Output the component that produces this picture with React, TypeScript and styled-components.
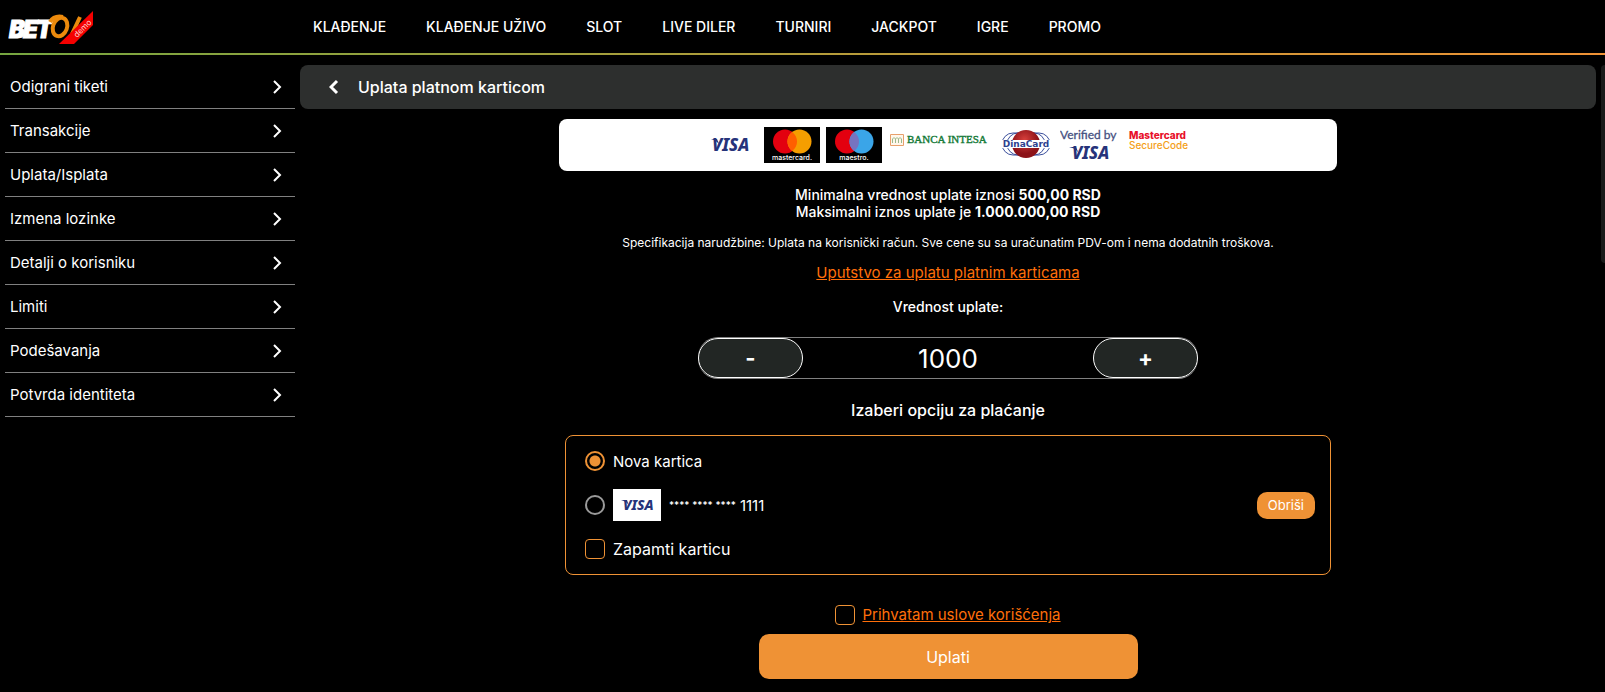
import React, { useState } from "react";
import styled, { createGlobalStyle } from "styled-components";

const orange = "#ef9235";
const linkOrange = "#ff6f0a";
const font = `Inter, "Noto Sans", sans-serif`;

const GlobalStyle = createGlobalStyle`
  *, *::before, *::after { box-sizing: border-box; }
  body {
    margin: 0;
    background: #000;
    color: #fff;
    font-family: ${font};
    font-size: 14px;
    overflow-x: hidden;
  }
  button, input { font-family: inherit; }
`;

const Page = styled.div`
  min-height: 100vh;
`;

const Header = styled.header`
  display: flex;
  align-items: center;
  height: 55px;
  border-bottom: 2px solid;
  border-image: linear-gradient(90deg, #76a640, #f09235) 1;
`;

const Brand = styled.a`
  display: block;
  flex: 0 0 313px;
  padding-left: 8px;
  svg { display: block; }
`;

const MainNav = styled.nav`
  display: flex;
  gap: 40px;
`;

const NavLink = styled.a`
  color: #fff;
  font-size: 14px;
  font-weight: 500;
  line-height: 20px;
  text-decoration: none;
  white-space: nowrap;
`;

const Body = styled.div`
  display: grid;
  grid-template-columns: 290px minmax(0, 1fr) 4px;
  gap: 5px;
  padding: 10px 0 10px 5px;
  align-items: start;
`;

const SideNav = styled.nav`
  display: flex;
  flex-direction: column;
`;

const SideLink = styled.a`
  display: flex;
  align-items: center;
  justify-content: space-between;
  height: 44px;
  padding: 0 13px 0 5px;
  border-bottom: 1px solid #808080;
  color: #fff;
  font-size: 15px;
  text-decoration: none;
`;

const ScrollThumb = styled.div`
  height: 198px;
  background: #191a1a;
  border-radius: 4px 0 0 4px;
`;

const Content = styled.main`
  display: flex;
  flex-direction: column;
  align-items: center;
`;

const TitleBar = styled.div`
  display: flex;
  align-items: center;
  align-self: stretch;
  height: 44px;
  background: #2d2f2e;
  border-radius: 8px;
`;

const BackButton = styled.button`
  display: flex;
  align-items: center;
  justify-content: center;
  width: 58px;
  height: 44px;
  padding: 0 0 0 10px;
  border: 0;
  background: none;
  color: #fff;
  cursor: pointer;
`;

const Title = styled.h1`
  margin: 0;
  font-size: 16px;
  font-weight: 500;
`;

const LogoPanel = styled.div`
  display: flex;
  align-items: flex-start;
  justify-content: center;
  gap: 6px;
  width: 60%;
  margin-top: 10px;
  padding: 8px 0 4px;
  background: #fff;
  border-radius: 8px;
  svg { display: block; flex: none; }
`;

const Limits = styled.p`
  margin: 15px 0 0;
  font-size: 14px;
  font-weight: 500;
  line-height: 17px;
  text-align: center;
`;

const Spec = styled.p`
  margin: 15px 0 0;
  font-size: 12px;
  line-height: 16px;
  text-align: center;
`;

const TextLink = styled.a`
  color: ${linkOrange};
  font-size: 15px;
  line-height: 20px;
`;

const Guide = styled.div`
  margin-top: 12px;
  line-height: 20px;
`;

const FieldLabel = styled.label`
  margin-top: 14px;
  font-size: 14px;
  font-weight: 500;
  line-height: 20px;
`;

const Stepper = styled.div`
  display: flex;
  justify-content: space-between;
  width: 500px;
  max-width: 100%;
  height: 42px;
  margin-top: 20px;
  border: solid #808080;
  border-width: 1px 0;
  border-radius: 20px;
`;

const StepButton = styled.button`
  flex: 0 0 105px;
  border: 1px solid #fff;
  border-radius: 20px;
  background: #222624;
  color: #fff;
  font-size: 22px;
  font-weight: 700;
  line-height: 20px;
  cursor: pointer;
`;

const Amount = styled.input`
  flex: 1;
  min-width: 0;
  padding: 0;
  border: 0;
  background: none;
  color: #fff;
  font-size: 26px;
  text-align: center;
  outline: none;
`;

const OptionsTitle = styled.h2`
  margin: 21px 0 0;
  font-size: 16px;
  font-weight: 500;
  line-height: 20px;
`;

const Options = styled.div`
  width: 766px;
  max-width: 100%;
  margin-top: 15px;
  padding: 3px 15px 3px 19px;
  border: 1px solid ${orange};
  border-radius: 8px;
`;

const OptionRow = styled.div`
  display: flex;
  align-items: center;
  justify-content: space-between;
  height: 44px;
`;

const OptionLabel = styled.label<{ $large?: boolean }>`
  display: flex;
  align-items: center;
  gap: 8px;
  font-size: ${(p) => (p.$large ? 16 : 15)}px;
  cursor: pointer;
`;

const CardNumber = styled.span`
  display: flex;
  align-items: center;
  gap: 4px;
`;

const Mask = styled.span`
  font-family: Lato, sans-serif;
  font-size: 12px;
  font-weight: 900;
`;

const Radio = styled.input`
  appearance: none;
  width: 20px;
  height: 20px;
  margin: 0;
  border: 2px solid #9a9a9a;
  border-radius: 50%;
  &:checked {
    border-color: ${orange};
    background: radial-gradient(circle, ${orange} 5px, transparent 6px);
  }
`;

const Checkbox = styled.input`
  appearance: none;
  width: 20px;
  height: 20px;
  margin: 0;
  border: 1px solid ${orange};
  border-radius: 4px;
  &:checked {
    background: ${orange};
  }
`;

const DeleteButton = styled.button`
  height: 27px;
  padding: 0 11px;
  border: 0;
  border-radius: 10px;
  background: ${orange};
  color: #fff;
  font-size: 13px;
  cursor: pointer;
`;

const Terms = styled.div`
  display: flex;
  align-items: center;
  gap: 7px;
  margin-top: 30px;
`;

const PayButton = styled.button`
  width: 379px;
  max-width: 100%;
  height: 45px;
  margin-top: 9px;
  border: 0;
  border-radius: 10px;
  background: ${orange};
  color: #fff;
  font-size: 16px;
  cursor: pointer;
`;

const Chevron = ({ left = false }: { left?: boolean }) => (
  <svg width="10" height="16" viewBox="0 0 10 16" fill="none" aria-hidden="true">
    <path d={left ? "M8 2L2 8l6 6" : "M2 2l6 6-6 6"} stroke="#fff" strokeWidth={left ? 3 : 2} />
  </svg>
);

const BrandLogo = () => (
  <svg width="86" height="34" viewBox="0 0 86 34" role="img" aria-label="Betol demo">
    <text x="1" y="28" fill="#fff" stroke="#fff" strokeWidth="1" fontFamily={font} fontSize="24" fontWeight="900" fontStyle="italic" letterSpacing="-2">BET</text>
    <ellipse cx="52" cy="17" rx="7" ry="9.500" transform="rotate(20 52 17)" fill="none" stroke="#ec8a0c" strokeWidth="4" />
    <path d="M42 12c3-5 8-6 13-5M72 7l-8 17" stroke="#ec8a0c" strokeWidth="4" fill="none" />
    <path d="M85 1v14L66 34H51z" fill="#f50000" />
    <text transform="translate(69 28) rotate(-45)" fill="#ffd0d0" fontFamily={font} fontSize="8">demo</text>
  </svg>
);

const VisaMark = ({ x, y, size }: { x: number; y: number; size: number }) => (
  <text x={x} y={y} fill="#26337a" fontFamily={`"Noto Sans", sans-serif`} fontSize={size} fontWeight="800" fontStyle="italic">VISA</text>
);

const VisaLogo = () => (
  <svg width="50" height="36" viewBox="0 0 50 36" role="img" aria-label="Visa">
    <VisaMark x={4} y={24} size={17} />
    <path d="M3 12h6l3 7c-2-4-5-6-9-7z" fill="#26337a" />
  </svg>
);

const CirclesLogo = ({ name, right, overlap }: { name: string; right: string; overlap: string }) => (
  <svg width="56" height="36" viewBox="0 0 56 36" role="img" aria-label={name}>
    <path d="M0 0h56v36H0z" fill="#000" />
    <circle cx="21" cy="14.500" r="12" fill="#e3000f" />
    <circle cx="35.500" cy="14.500" r="12" fill={right} />
    <path d="M28.250 4.900a12 12 0 0 1 0 19.200a12 12 0 0 1 0-19.200" fill={overlap} />
    <text x="28" y="33" textAnchor="middle" fill="#fff" fontFamily={font} fontSize="7" fontWeight="500">{name}</text>
  </svg>
);

const IntesaLogo = () => (
  <svg width="104" height="36" viewBox="0 0 104 36" role="img" aria-label="Banca Intesa">
    <path d="M2.500 7.500h13v11h-13z" fill="#fff7ec" stroke="#e8a06c" />
    <path d="M4.500 16v-4q1.500-3 3 0v4m0-4q1.500-3 3 0v4m0-4q1.500-3 3 0v4" stroke="#9bb98b" fill="none" />
    <text x="19" y="16" fill="#157a38" stroke="#157a38" strokeWidth="0.400" fontFamily={`"Liberation Serif", serif`} fontSize="11">BANCA INTESA</text>
  </svg>
);

const DinaLogo = () => (
  <svg width="56" height="36" viewBox="0 0 56 36" role="img" aria-label="DinaCard">
    <defs>
      <radialGradient id="dina" cx="45%" cy="35%">
        <stop offset="0" stopColor="#d8403c" />
        <stop offset="1" stopColor="#8c1218" />
      </radialGradient>
    </defs>
    <rect x="4" y="6" width="48" height="22" rx="11" fill="none" stroke="#3b4f9c" />
    <rect x="9" y="6" width="38" height="22" rx="11" fill="none" stroke="#3b4f9c" />
    <circle cx="28" cy="17" r="14" fill="url(#dina)" />
    <path d="M2 13h52v8H2z" fill="#fff" />
    <text x="28" y="20" textAnchor="middle" fill="#2d418f" fontFamily={`"DejaVu Sans", sans-serif`} fontSize="9" fontWeight="700">DinaCard</text>
  </svg>
);

const VerifiedLogo = () => (
  <svg width="58" height="40" viewBox="0 0 58 40" role="img" aria-label="Verified by Visa">
    <text x="0" y="12" fill="#46507f" stroke="#46507f" strokeWidth="0.300" fontFamily="Lato, sans-serif" fontSize="12">Verified by</text>
    <VisaMark x={12} y={32} size={17} />
    <path d="M9 20h7l3 7c-2-4-5-6-10-7z" fill="#26337a" />
  </svg>
);

const SecureCodeLogo = () => (
  <svg width="64" height="36" viewBox="0 0 64 36" role="img" aria-label="Mastercard SecureCode">
    <text x="5" y="12" fill="#e8102a" fontFamily={font} fontSize="10" fontWeight="800">Mastercard</text>
    <text x="5" y="22" fill="#f4a019" fontFamily={font} fontSize="10" fontWeight="500">SecureCode</text>
  </svg>
);

const CardBadge = () => (
  <svg width="48" height="32" viewBox="0 0 48 32" role="img" aria-label="Visa">
    <path d="M0 0h48v32H0z" fill="#fff" />
    <VisaMark x={10} y={21} size={14} />
    <path d="M8 11h6l2 6c-1-3-4-5-8-6z" fill="#26337a" />
  </svg>
);

const navItems = ["KLAĐENJE", "KLAĐENJE UŽIVO", "SLOT", "LIVE DILER", "TURNIRI", "JACKPOT", "IGRE", "PROMO"];

const sideItems = [
  "Odigrani tiketi",
  "Transakcije",
  "Uplata/Isplata",
  "Izmena lozinke",
  "Detalji o korisniku",
  "Limiti",
  "Podešavanja",
  "Potvrda identiteta",
];

export default function App() {
  const [amount, setAmount] = useState(1000);
  const [card, setCard] = useState("new");

  return (
    <Page>
      <GlobalStyle />
      <Header>
        <Brand href="#"><BrandLogo /></Brand>
        <MainNav>
          {navItems.map((item) => <NavLink key={item} href="#">{item}</NavLink>)}
        </MainNav>
      </Header>
      <Body>
        <SideNav>
          {sideItems.map((item) => (
            <SideLink key={item} href="#">{item}<Chevron /></SideLink>
          ))}
        </SideNav>
        <Content>
          <TitleBar>
            <BackButton type="button" aria-label="Nazad"><Chevron left /></BackButton>
            <Title>Uplata platnom karticom</Title>
          </TitleBar>
          <LogoPanel>
            <VisaLogo />
            <CirclesLogo name="mastercard." right="#f59e00" overlap="#ff5f00" />
            <CirclesLogo name="maestro." right="#3aa5e8" overlap="#7673c0" />
            <IntesaLogo />
            <DinaLogo />
            <VerifiedLogo />
            <SecureCodeLogo />
          </LogoPanel>
          <Limits>
            Minimalna vrednost uplate iznosi <b>500,00 RSD</b><br />
            Maksimalni iznos uplate je <b>1.000.000,00 RSD</b>
          </Limits>
          <Spec>
            Specifikacija narudžbine: Uplata na korisnički račun. Sve cene su sa uračunatim PDV-om i nema dodatnih troškova.
          </Spec>
          <Guide><TextLink href="#">Uputstvo za uplatu platnim karticama</TextLink></Guide>
          <FieldLabel htmlFor="amount">Vrednost uplate:</FieldLabel>
          <Stepper>
            <StepButton type="button" onClick={() => setAmount(Math.max(500, amount - 100))}>-</StepButton>
            <Amount id="amount" inputMode="numeric" value={amount} onChange={(e) => setAmount(Number(e.target.value) || 0)} />
            <StepButton type="button" onClick={() => setAmount(amount + 100)}>+</StepButton>
          </Stepper>
          <OptionsTitle>Izaberi opciju za plaćanje</OptionsTitle>
          <Options>
            <OptionRow>
              <OptionLabel>
                <Radio type="radio" name="card" checked={card === "new"} onChange={() => setCard("new")} />
                Nova kartica
              </OptionLabel>
            </OptionRow>
            <OptionRow>
              <OptionLabel>
                <Radio type="radio" name="card" checked={card === "saved"} onChange={() => setCard("saved")} />
                <CardBadge />
                <CardNumber><Mask>**** **** ****</Mask> 1111</CardNumber>
              </OptionLabel>
              <DeleteButton type="button">Obriši</DeleteButton>
            </OptionRow>
            <OptionRow>
              <OptionLabel $large>
                <Checkbox type="checkbox" />
                Zapamti karticu
              </OptionLabel>
            </OptionRow>
          </Options>
          <Terms>
            <Checkbox type="checkbox" aria-label="Prihvatam uslove korišćenja" />
            <TextLink href="#">Prihvatam uslove korišćenja</TextLink>
          </Terms>
          <PayButton type="button">Uplati</PayButton>
        </Content>
        <ScrollThumb />
      </Body>
    </Page>
  );
}
